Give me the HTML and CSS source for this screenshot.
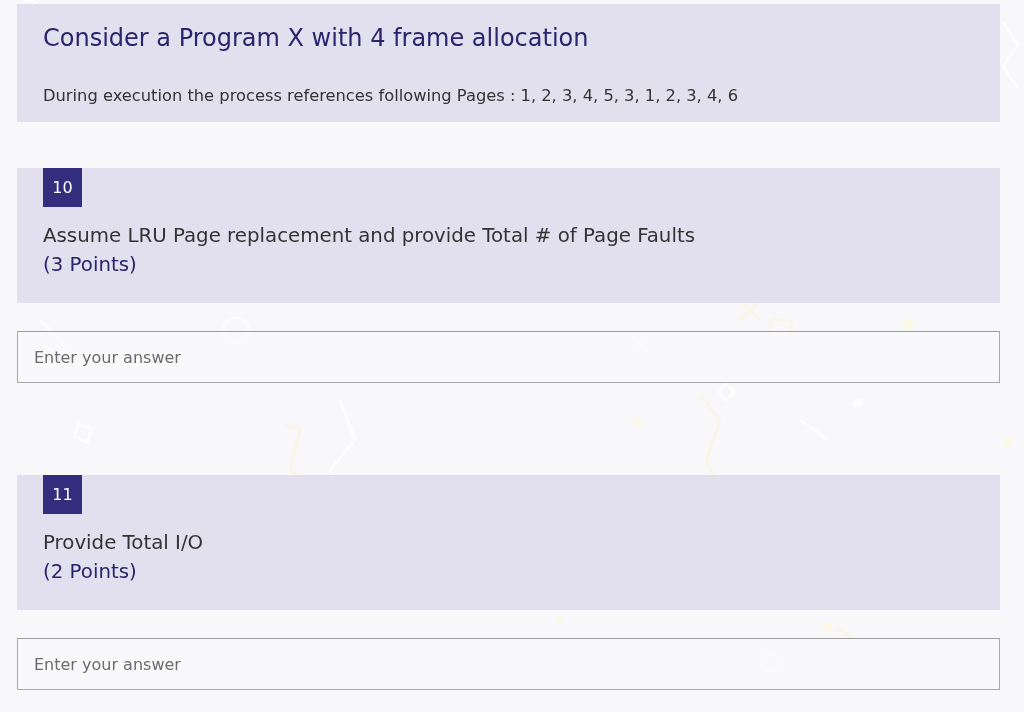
FILE: index.html
```html
<!DOCTYPE html>
<html lang="en">
<head>
<meta charset="utf-8">
<title>Quiz</title>
<link rel="stylesheet" href="styles.css">
</head>
<body>
<svg class="bg-pattern" width="1024" height="712" viewBox="0 0 1024 712" aria-hidden="true">
  <g fill="none" stroke="#ffffff" stroke-width="3" opacity="0.7">
    <circle cx="30" cy="8" r="8"/>
    <circle cx="533" cy="64" r="12"/>
    <circle cx="590" cy="258" r="12"/>
    <circle cx="236" cy="330" r="12"/>
    <circle cx="770" cy="662" r="9"/>
    <rect x="876" y="60" width="14" height="14" transform="rotate(45 883 67)"/>
    <rect x="226" y="186" width="14" height="14"/>
    <rect x="76" y="426" width="14" height="14" transform="rotate(20 83 433)"/>
    <rect x="720" y="386" width="12" height="12" transform="rotate(45 726 392)"/>
    <rect x="960" y="560" width="26" height="26" transform="rotate(20 973 573)"/>
    <path d="M1003 22 L1018 45 L1003 67 L1018 88"/>
    <path d="M520 176 L540 196 M540 176 L520 196"/>
    <path d="M925 212 L945 232 M945 212 L925 232"/>
    <path d="M630 335 L648 352 M648 335 L630 352"/>
    <path d="M195 262 L215 262 M205 252 L205 272"/>
    <path d="M800 420 L828 440"/>
    <path d="M340 400 L355 440 L330 470 L345 500"/>
    <path d="M40 320 L70 350"/>
  </g>
  <g fill="none" stroke="#fbf6dc" stroke-width="3" opacity="0.6">
    <path d="M700 395 L720 420 L706 460 L720 490"/>
    <path d="M800 560 L820 580 M820 560 L800 580"/>
    <path d="M836 628 L864 644"/>
    <path d="M972 668 L968 690"/>
    <path d="M380 650 L400 670 M400 650 L380 670"/>
    <path d="M740 300 L760 320 M760 300 L740 320"/>
    <rect x="770" y="320" width="20" height="20" transform="rotate(10 780 330)"/>
    <path d="M285 425 L300 430 L290 470 L305 480"/>
  </g>
  <g fill="#fcf8e4" opacity="0.8">
    <circle cx="316" cy="352" r="6"/>
    <circle cx="908" cy="324" r="6"/>
    <circle cx="638" cy="422" r="5"/>
    <circle cx="1008" cy="442" r="5"/>
    <circle cx="827" cy="627" r="5"/>
    <circle cx="560" cy="620" r="4"/>
  </g>
  <g fill="#ffffff" opacity="0.7">
    <circle cx="693" cy="22" r="5"/>
    <circle cx="758" cy="37" r="4"/>
    <circle cx="858" cy="403" r="5"/>
    <circle cx="402" cy="497" r="5"/>
    <circle cx="877" cy="237" r="4"/>
  </g>
</svg>

<main class="page">
  <section class="intro card">
    <h1 class="intro-title">Consider a Program X with 4 frame allocation</h1>
    <p class="intro-text">During execution the process references following Pages : 1, 2, 3, 4, 5, 3, 1, 2, 3, 4, 6</p>
  </section>

  <section class="question">
    <div class="card question-card">
      <span class="badge">10</span>
      <p class="question-text">Assume LRU Page replacement and provide Total # of Page Faults</p>
      <p class="points">(3 Points)</p>
    </div>
    <input class="answer" type="text" placeholder="Enter your answer">
  </section>

  <section class="question">
    <div class="card question-card">
      <span class="badge">11</span>
      <p class="question-text">Provide Total I/O</p>
      <p class="points">(2 Points)</p>
    </div>
    <input class="answer" type="text" placeholder="Enter your answer">
  </section>
</main>
</body>
</html>
```

FILE: styles.css
```css
html, body {
  margin: 0;
  padding: 0;
}

body {
  background: #f8f8fa;
  font-family: "DejaVu Sans", sans-serif;
  color: #333333;
  width: 1024px;
  height: 712px;
  overflow: hidden;
  position: relative;
}

.bg-pattern {
  position: absolute;
  left: 0;
  top: 0;
  z-index: 0;
}

.page {
  position: relative;
  z-index: 1;
  width: 983px;
  padding: 4px 0 0 17px;
  display: flex;
  flex-direction: column;
}

.card {
  background: rgba(224, 222, 237, 0.94);
}

.intro {
  padding: 17px 26px 15px;
  display: flex;
  flex-direction: column;
  gap: 30px;
}

.intro-title {
  margin: 0;
  font-size: 24px;
  line-height: 34px;
  font-weight: normal;
  color: #29246c;
}

.intro-text {
  margin: 0;
  font-size: 16.3px;
  line-height: 22px;
  color: #333333;
}

.question {
  display: flex;
  flex-direction: column;
  gap: 28px;
  margin-top: 46px;
}

.question + .question {
  margin-top: 92px;
}

.question-card {
  padding: 0 26px 24px;
  display: flex;
  flex-direction: column;
  align-items: flex-start;
}

.badge {
  width: 39px;
  height: 39px;
  background: #322e7d;
  color: #ffffff;
  font-size: 16px;
  display: flex;
  align-items: center;
  justify-content: center;
  margin-bottom: 14px;
}

.question-text {
  margin: 0;
  font-size: 19.8px;
  line-height: 29px;
  color: #333333;
}

.points {
  margin: 0;
  font-size: 19.8px;
  line-height: 29px;
  color: #29246c;
}

.answer {
  box-sizing: border-box;
  width: 983px;
  height: 52px;
  margin: 0;
  padding: 0 16px;
  border: 1px solid #a9a9a9;
  border-top-color: #9c9c9c;
  background: rgba(249, 249, 251, 0.85);
  font-family: "DejaVu Sans", sans-serif;
  font-size: 16px;
  color: #333333;
  outline: none;
}

.answer::placeholder {
  color: #6b6b6b;
  opacity: 1;
}
```
